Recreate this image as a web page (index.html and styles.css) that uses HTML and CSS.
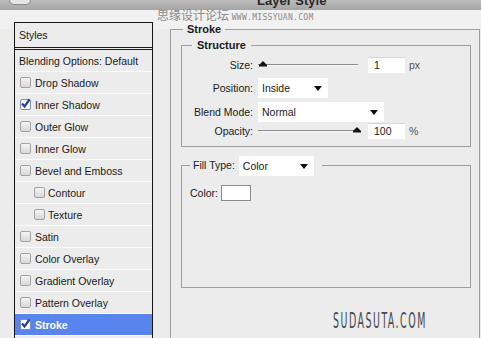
FILE: index.html
```html
<!DOCTYPE html>
<html lang="en">
<head>
    <meta charset="UTF-8">
    <title>Layer Style</title>
    <link rel="stylesheet" href="styles.css">
</head>
<body>
    <div class="titlebar">
        <span class="winicon"></span>
        <span class="title">Layer Style</span>
    </div>

    <div class="dialog">
        <ul class="styles-list">
            <li class="list-head">Styles</li>
            <li class="list-item">Blending Options: Default</li>
            <li class="list-item"><span class="check"></span>Drop Shadow</li>
            <li class="list-item"><span class="check checked"><svg viewBox="0 0 11 11"><path d="M2 5.5 L4.5 8.5 L9.5 1.5" /></svg></span>Inner Shadow</li>
            <li class="list-item"><span class="check"></span>Outer Glow</li>
            <li class="list-item"><span class="check"></span>Inner Glow</li>
            <li class="list-item"><span class="check"></span>Bevel and Emboss</li>
            <li class="list-item sub"><span class="check"></span>Contour</li>
            <li class="list-item sub"><span class="check"></span>Texture</li>
            <li class="list-item"><span class="check"></span>Satin</li>
            <li class="list-item"><span class="check"></span>Color Overlay</li>
            <li class="list-item"><span class="check"></span>Gradient Overlay</li>
            <li class="list-item"><span class="check"></span>Pattern Overlay</li>
            <li class="list-item active"><span class="check checked"><svg viewBox="0 0 11 11"><path d="M2 5.5 L4.5 8.5 L9.5 1.5" /></svg></span>Stroke</li>
        </ul>

        <fieldset class="group group-stroke">
            <legend>Stroke</legend>

            <fieldset class="group group-structure">
                <legend>Structure</legend>

                <div class="field-row row-size">
                    <label>Size:</label>
                    <div class="slider"><svg class="thumb thumb-left" viewBox="0 0 8 7"><path d="M0 5 L4 1 L8 5 Z" /><rect x="0" y="5" width="8" height="1.5" /></svg></div>
                    <span class="num-input">1</span>
                    <span class="unit">px</span>
                </div>

                <div class="field-row row-position">
                    <label>Position:</label>
                    <span class="dropdown dd-position">Inside<i class="arrow"></i></span>
                </div>

                <div class="field-row row-blend">
                    <label>Blend Mode:</label>
                    <span class="dropdown dd-blend">Normal<i class="arrow"></i></span>
                </div>

                <div class="field-row row-opacity">
                    <label>Opacity:</label>
                    <div class="slider"><svg class="thumb thumb-right" viewBox="0 0 8 7"><path d="M0 5 L4 1 L8 5 Z" /><rect x="0" y="5" width="8" height="1.5" /></svg></div>
                    <span class="num-input">100</span>
                    <span class="unit">%</span>
                </div>
            </fieldset>

            <fieldset class="group group-fill">
                <legend><span class="fill-label">Fill Type:</span><span class="dropdown dd-fill">Color<i class="arrow"></i></span></legend>
                <div class="color-row">
                    <span>Color:</span>
                    <span class="swatch"></span>
                </div>
            </fieldset>
        </fieldset>
    </div>

    <!-- watermarks on top of the screenshot -->
    <div class="wm-top">思缘设计论坛 <span class="wm-url">WWW.MISSYUAN.COM</span></div>
    <div class="wm-bottom">SUDASUTA.COM</div>
</body>
</html>
```

FILE: styles.css
```css
body {
    margin: 0;
    width: 481px;
    height: 338px;
    overflow: hidden;
    position: relative;
    background: #ececec;
    font-family: 'Liberation Sans', Arial, sans-serif;
    font-size: 10.5px;
    color: #1a1a1a;
}
.titlebar {
    height: 10px;
    overflow: hidden;
    background: linear-gradient(#bcbcbc, #a5a5a5);
    position: relative;
}
.winicon {
    position: absolute;
    left: 9px;
    top: -3px;
    width: 20px;
    height: 6px;
    background: #e4e4e4;
    border: 1px solid #8a8a8a;
    border-radius: 0 0 5px 5px;
}
.title {
    display: block;
    margin: -6px 0 0 257px;
    font-size: 13px;
    font-weight: bold;
    line-height: 13px;
    color: #2a2a2a;
}
.dialog {
    display: flex;
    align-items: flex-start;
    padding: 12px 0 0 14px;
    background: linear-gradient(#f1f1f1 0, #f1f1f1 19px, #ececec 19px);
}
.styles-list {
    list-style: none;
    margin: 0 17px 0 0;
    padding: 0;
    width: 137px;
    height: 315px;
    overflow: hidden;
    border: 1px solid #161616;
    border-bottom: none;
    background: #ececec;
}
.list-head {
    height: 24px;
    line-height: 24px;
    padding-left: 4px;
    border-bottom: 3px double #1c1c1c;
}
.list-item {
    display: flex;
    align-items: center;
    height: 21px;
    padding-left: 4px;
    border-bottom: 1px solid #fbfbfb;
}
.list-item .check {
    margin: 0 4px 0 1px;
}
.list-item.sub {
    padding-left: 18px;
}
.list-item.sub .check {
    margin-right: 3px;
}
.list-item.active {
    background: #5884ee;
    color: #fff;
    font-weight: bold;
}
.check {
    width: 9px;
    height: 9px;
    flex: none;
    border: 1px solid #a2a2a2;
    border-radius: 2px;
    background: linear-gradient(#f4f4f4, #d8d8d8);
}
.check svg {
    display: block;
    width: 11px;
    height: 11px;
    margin: -2px 0 0 -1px;
}
.check svg path {
    fill: none;
    stroke: #21429c;
    stroke-width: 2.2;
}
.check.checked {
    background: #fdfdfd;
    border-color: #7f8fb4;
}

/* option groups */
.group {
    margin: 0;
    border: 1px solid #9e9e9e;
    min-width: 0;
}
.group legend {
    font-size: 11px;
    font-weight: bold;
    line-height: 14px;
}
.group-stroke {
    box-sizing: border-box;
    width: 310px;
    height: 316px;
    padding: 2px 8px 0 10px;
    border-bottom: none;
}
.group-stroke > legend {
    margin-left: 2px;
    padding: 0 4px;
}
.group-structure {
    padding: 0 0 7px 0;
}
.group-structure > legend {
    margin-left: 10px;
    padding: 0 5px;
}
.field-row {
    display: flex;
    align-items: center;
}
.field-row label {
    width: 71px;
    margin-right: 5px;
    text-align: right;
    flex: none;
}
.row-size {
    margin-top: 5px;
    height: 16px;
}
.row-position {
    margin-top: 5px;
    height: 20px;
}
.row-blend {
    margin-top: 4px;
    height: 20px;
}
.row-opacity {
    margin-top: 1px;
    height: 16px;
}
.slider {
    position: relative;
    width: 100px;
    height: 2px;
    margin-right: 10px;
    border-top: 1px solid #8a8a8a;
    border-bottom: 1px solid #fafafa;
    box-sizing: border-box;
    background: #c4c4c4;
}
.thumb {
    position: absolute;
    top: -5px;
    width: 8px;
    height: 7px;
    fill: #111;
}
.thumb-left {
    left: 1px;
}
.thumb-right {
    right: -3px;
}
.num-input {
    width: 31px;
    height: 16px;
    line-height: 16px;
    padding-left: 6px;
    background: #fff;
    box-shadow: inset 0 1px 0 #d8d8d8;
}
.unit {
    margin-left: 4px;
    color: #555;
}
.dropdown {
    position: relative;
    display: inline-block;
    height: 20px;
    line-height: 21px;
    padding-left: 4px;
    box-sizing: border-box;
    background: #fff;
    font-size: 10.5px;
    font-weight: normal;
    vertical-align: middle;
}
.dd-position {
    width: 70px;
}
.dd-blend {
    width: 126px;
}
.dd-fill {
    width: 75px;
}
.arrow {
    position: absolute;
    right: 6px;
    top: 8px;
    border-left: 4px solid transparent;
    border-right: 4px solid transparent;
    border-top: 5px solid #111;
}
.group-fill {
    margin-top: 8px;
    padding: 0 0 86px 8px;
}
.group-fill > legend {
    padding: 0 8px 0 3px;
    line-height: 20px;
    font-size: 10.5px;
    font-weight: normal;
}
.fill-label {
    margin-right: 4px;
}
.color-row {
    display: flex;
    align-items: center;
    margin-top: 9px;
    height: 16px;
}
.swatch {
    width: 28px;
    height: 14px;
    margin-left: 3px;
    background: #fff;
    border: 1px solid #8c8c8c;
}

/* watermarks */
.wm-top {
    position: absolute;
    left: 157px;
    top: 8px;
    font-family: 'Noto Sans CJK SC', sans-serif;
    font-size: 12px;
    line-height: 13px;
    color: #8a8a8a;
}
.wm-url {
    font-family: 'DejaVu Sans Mono', monospace;
    font-size: 8px;
    letter-spacing: 0.3px;
}
.wm-bottom {
    position: absolute;
    left: 333px;
    top: 309px;
    font-family: 'DejaVu Sans Condensed', 'DejaVu Sans', sans-serif;
    font-size: 21px;
    letter-spacing: 3px;
    color: #4a4a4a;
    transform: scaleX(0.5);
    transform-origin: left top;
}
```
